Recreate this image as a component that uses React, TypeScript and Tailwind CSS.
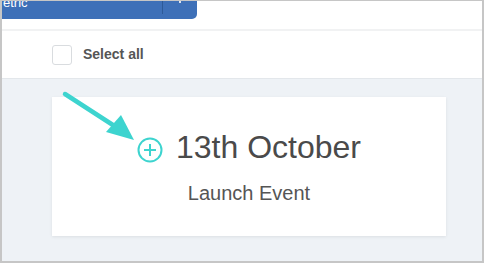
import React from 'react';

const TEAL = '#3dd4cf';

// Annotation arrow drawn over the page
const PointerArrow: React.FC = () => (
  <svg
    className="absolute left-0 top-0 pointer-events-none"
    width="484"
    height="263"
    viewBox="0 0 484 263"
  >
    <line x1="63" y1="93" x2="114" y2="126" stroke={TEAL} strokeWidth="4.5" strokeLinecap="round" />
    <polygon points="132,139 104,131 119,114" fill={TEAL} />
  </svg>
);

const PlusCircle: React.FC = () => (
  <svg width="26" height="26" viewBox="0 0 26 26" className="shrink-0 mt-[5px]">
    <circle cx="13" cy="13" r="11.5" fill="none" stroke={TEAL} strokeWidth="2" />
    <line x1="13" y1="7" x2="13" y2="19" stroke={TEAL} strokeWidth="2" />
    <line x1="7" y1="13" x2="19" y2="13" stroke={TEAL} strokeWidth="2" />
  </svg>
);

export default function App() {
  return (
    <div
      className="relative w-[484px] h-[263px] overflow-hidden flex flex-col border-t border-l-2 border-r-2 border-b-2 border-[#c6c6c6] bg-white"
      style={{ fontFamily: '"Liberation Sans", Arial, sans-serif' }}
    >
      {/* Top bar with cut-off dropdown */}
      <div className="h-[28px] shrink-0 bg-white">
        <div className="relative w-[195px] h-[18px] bg-[#3e70b8] rounded-br-[5px] overflow-hidden flex">
          <span className="block text-white text-[13px] leading-none -mt-[5px] ml-[1px]">etric</span>
          <div className="ml-auto w-px h-[13px] bg-[#2d5a98] mr-[34px]" />
          <div className="absolute left-[177px] top-0 w-[2px] h-[2px] bg-white/80" />
        </div>
      </div>
      <div className="h-[2px] shrink-0 bg-[#f1f2f3]" />

      {/* Select all row */}
      <div className="h-[48px] shrink-0 flex items-center pl-[50px] gap-[11px] border-b border-[#e3e7eb]">
        <div className="w-[20px] h-[20px] rounded-[3px] border border-[#d9dcdf] bg-white" />
        <span className="text-[14px] font-bold text-[#555555]">Select all</span>
      </div>

      {/* Content area */}
      <div className="flex-1 bg-[#eef2f6] pl-[50px] pt-[18px]">
        <div className="w-[394px] h-[139px] bg-white shadow-[0_1px_3px_rgba(0,0,0,0.08)] flex flex-col items-center pt-[31px]">
          <div className="flex items-center gap-[13px]">
            <PlusCircle />
            <span className="text-[32px] leading-[38px] text-[#4a4a4a]">13th October</span>
          </div>
          <div className="mt-[15px] text-[20px] leading-[24px] text-[#555555]">Launch Event</div>
        </div>
      </div>

      <PointerArrow />
    </div>
  );
}
